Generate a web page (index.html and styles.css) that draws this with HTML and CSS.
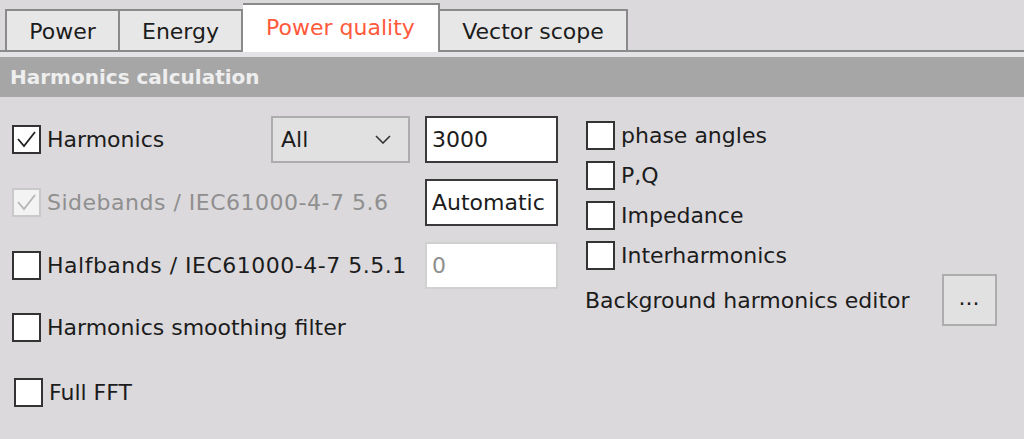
FILE: index.html
```html
<!DOCTYPE html>
<html lang="en">
<head>
<meta charset="utf-8">
<title>Power quality</title>
<link rel="stylesheet" href="styles.css">
</head>
<body>
<div class="tabbar">
  <div class="tab tab-power">Power</div>
  <div class="tab tab-energy">Energy</div>
  <div class="tab tab-active">Power quality</div>
  <div class="tab tab-vector">Vector scope</div>
</div>
<div class="strip"></div>
<div class="section-header">Harmonics calculation</div>
<div class="content">
  <div class="left">
    <div class="grid">
      <label class="check-row">
        <span class="box checked"><svg viewBox="0 0 25 25" width="25" height="25"><polyline points="4,12 10,19 21,5" fill="none" stroke="#222" stroke-width="1.8"/></svg></span>
        <span class="lbl">Harmonics</span>
      </label>
      <div class="select">
        <span>All</span>
        <svg class="chev" viewBox="0 0 16 9" width="16" height="9"><polyline points="1,1 8,8 15,1" fill="none" stroke="#333" stroke-width="1.6"/></svg>
      </div>
      <div class="input">3000</div>

      <label class="check-row span2 disabled">
        <span class="box dis"><svg viewBox="0 0 25 25" width="25" height="25"><polyline points="4,12 10,19 21,5" fill="none" stroke="#b5b5b5" stroke-width="1.8"/></svg></span>
        <span class="lbl">Sidebands / IEC61000-4-7 5.6</span>
      </label>
      <div class="input input-tall">Automatic</div>

      <label class="check-row span2">
        <span class="box"></span>
        <span class="lbl">Halfbands / IEC61000-4-7 5.5.1</span>
      </label>
      <div class="input input-disabled">0</div>
    </div>
    <label class="check-row row-smooth">
      <span class="box"></span>
      <span class="lbl">Harmonics smoothing filter</span>
    </label>
    <label class="check-row row-fft">
      <span class="box"></span>
      <span class="lbl">Full FFT</span>
    </label>
  </div>
  <div class="right">
    <label class="check-row r-row"><span class="box"></span><span class="lbl">phase angles</span></label>
    <label class="check-row r-row"><span class="box"></span><span class="lbl">P,Q</span></label>
    <label class="check-row r-row"><span class="box"></span><span class="lbl">Impedance</span></label>
    <label class="check-row r-row"><span class="box"></span><span class="lbl">Interharmonics</span></label>
    <div class="bg-row">
      <span class="lbl">Background harmonics editor</span>
      <div class="btn">...</div>
    </div>
  </div>
</div>
</body>
</html>
```

FILE: styles.css
```css
html, body {
  margin: 0;
  padding: 0;
}
body {
  width: 1024px;
  height: 439px;
  overflow: hidden;
  background: #dbd9dc;
  font-family: "DejaVu Sans", Verdana, sans-serif;
  font-size: 22px;
  color: #1c1c1c;
}

/* Tabs */
.tabbar {
  height: 50px;
  display: flex;
  align-items: flex-end;
  padding-left: 5px;
  border-bottom: 2px solid #8a8a8a;
  background: #dbd9dc;
}
.tab {
  box-sizing: border-box;
  height: 41px;
  background: #e7e7e7;
  border: 2px solid #8a8a8a;
  border-bottom: none;
  display: flex;
  align-items: center;
  justify-content: center;
  padding-top: 2px;
  color: #1c1c1c;
}
.tab + .tab { border-left: none; }
.tab-power { width: 115px; }
.tab-energy { width: 123px; }
.tab-vector { width: 188px; }
.tab-active {
  width: 197px;
  height: 49px;
  margin-bottom: -2px;
  background: #ffffff;
  border-left: 2px solid #8a8a8a;
  color: #ff5a3c;
  padding-bottom: 4px;
}
.tab-active + .tab { border-left: none; }

.strip {
  height: 5px;
  background: #e3e2e4;
}

.section-header {
  height: 40px;
  background: #a6a6a6;
  color: #eeeeee;
  font-weight: bold;
  font-size: 20px;
  display: flex;
  align-items: center;
  padding-left: 10px;
}

/* Content */
.content {
  display: flex;
}
.left {
  width: 586px;
  flex: none;
  padding-left: 12px;
  padding-top: 19px;
  box-sizing: border-box;
}
.grid {
  display: grid;
  grid-template-columns: 244px 139px 133px;
  grid-auto-rows: 47px;
  column-gap: 15px;
  row-gap: 16px;
}
.span2 { grid-column: 1 / 3; }

.check-row {
  display: flex;
  align-items: center;
  gap: 6px;
  white-space: nowrap;
}
.span2 .lbl { letter-spacing: 0.5px; }
.box {
  box-sizing: border-box;
  width: 29px;
  height: 29px;
  flex: none;
  background: #ffffff;
  border: 2px solid #333333;
  display: flex;
  align-items: center;
  justify-content: center;
}
.box.dis {
  border-color: #c9c9c9;
  background: #f3f3f3;
}
.disabled .lbl { color: #8f8f8f; }

.select {
  box-sizing: border-box;
  background: #e1e1e1;
  border: 2px solid #adadad;
  display: flex;
  align-items: center;
  justify-content: space-between;
  padding: 0 17px 0 8px;
}
.chev { display: block; }

.input {
  box-sizing: border-box;
  background: #ffffff;
  border: 2px solid #3a3a3a;
  display: flex;
  align-items: center;
  padding-left: 5px;
  white-space: nowrap;
}
.input-disabled {
  border-color: #d0d0d0;
  color: #8f8f8f;
}

.row-smooth {
  margin-top: 23px;
  height: 30px;
}
.row-fft {
  margin-top: 35px;
  height: 30px;
  padding-left: 2px;
}

.right {
  padding-top: 24px;
  display: flex;
  flex-direction: column;
  gap: 11px;
}
.r-row {
  height: 29px;
}
.bg-row {
  margin-top: -7px;
  display: flex;
  align-items: center;
  gap: 32px;
  margin-left: -1px;
}
.btn {
  box-sizing: border-box;
  width: 55px;
  height: 52px;
  background: #e1e1e1;
  border: 2px solid #adadad;
  display: flex;
  align-items: center;
  justify-content: center;
  padding-bottom: 6px;
}
```
